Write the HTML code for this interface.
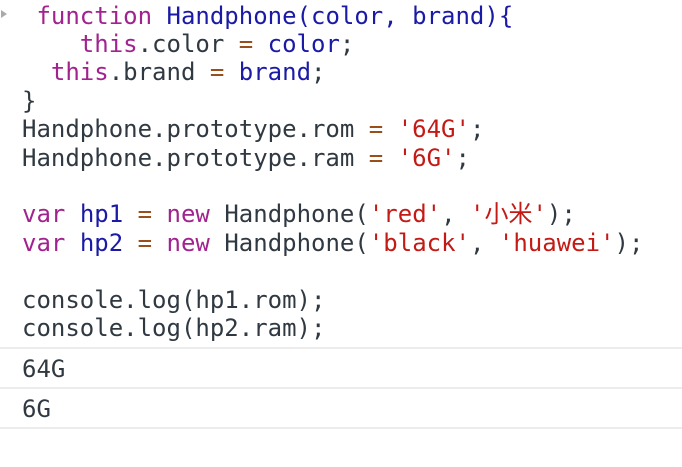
<!DOCTYPE html>
<html><head><meta charset="utf-8"><style>
html,body{margin:0;padding:0;background:#fff;width:682px;height:432px;overflow:hidden}
body{font-family:"DejaVu Sans Mono","Liberation Mono","Noto Sans CJK SC",monospace;font-size:24px;color:#303942}
pre{margin:0;font:inherit;line-height:28.4px;position:absolute;left:22px;top:1.5px;white-space:pre}
.k{color:#a1238f}.f{color:#1a1aa6}.s{color:#c41a16}.o{color:#994f1b}
.row{position:absolute;left:0;width:682px;height:40px;border-top:2px solid #ececec;box-sizing:border-box}
.row span{position:absolute;left:22px;top:5.5px;line-height:28.4px}
.arr{position:absolute;left:1px;top:10px;width:0;height:0;border-left:6px solid #aaa;border-top:4px solid transparent;border-bottom:4px solid transparent}
</style></head><body>
<div class="arr"></div>
<pre> <span class="k">function</span> <span class="f">Handphone(color, brand){</span>
    <span class="k">this</span>.color <span class="o">=</span> <span class="f">color</span>;
  <span class="k">this</span>.brand <span class="o">=</span> <span class="f">brand</span>;
}
Handphone.prototype.rom <span class="o">=</span> <span class="s">'64G'</span>;
Handphone.prototype.ram <span class="o">=</span> <span class="s">'6G'</span>;

<span class="k">var</span> <span class="f">hp1</span> <span class="o">=</span> <span class="k">new</span> Handphone(<span class="s">'red'</span>, <span class="s">'小米'</span>);
<span class="k">var</span> <span class="f">hp2</span> <span class="o">=</span> <span class="k">new</span> Handphone(<span class="s">'black'</span>, <span class="s">'huawei'</span>);

console.log(hp1.rom);
console.log(hp2.ram);</pre>
<div class="row" style="top:347px"><span>64G</span></div>
<div class="row" style="top:387px"><span>6G</span></div>
<div class="row" style="top:427px"></div>
</body></html>
